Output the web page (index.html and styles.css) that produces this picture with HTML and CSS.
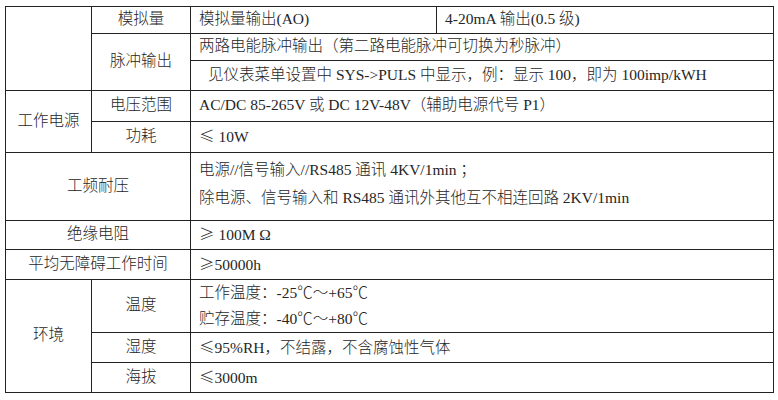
FILE: index.html
```html
<!DOCTYPE html>
<html lang="zh-CN">
<head>
<meta charset="utf-8">
<title>技术参数</title>
<link rel="stylesheet" href="styles.css">
</head>
<body>
<table class="spec">
  <colgroup>
    <col class="c1"><col class="c2"><col class="c3"><col class="c4">
  </colgroup>
  <tr class="h27">
    <td rowspan="3"></td>
    <td class="lab">模拟量</td>
    <td>模拟量输出(AO)</td>
    <td>4-20mA 输出(0.5 级)</td>
  </tr>
  <tr class="h27">
    <td rowspan="2" class="lab">脉冲输出</td>
    <td colspan="2">两路电能脉冲输出（第二路电能脉冲可切换为秒脉冲）</td>
  </tr>
  <tr class="h30">
    <td colspan="2" class="indent">见仪表菜单设置中 SYS-&gt;PULS 中显示，例：显示 100，即为 100imp/kWH</td>
  </tr>
  <tr class="h31">
    <td rowspan="2" class="lab">工作电源</td>
    <td class="lab">电压范围</td>
    <td colspan="2">AC/DC 85-265V 或 DC 12V-48V（辅助电源代号 P1）</td>
  </tr>
  <tr class="h31">
    <td class="lab">功耗</td>
    <td colspan="2"><span class="sym">≤</span> 10W</td>
  </tr>
  <tr class="h68">
    <td colspan="2" class="lab">工频耐压</td>
    <td colspan="2" class="top">电源//信号输入//RS485 通讯 4KV/1min ；<br>除电源、信号输入和 RS485 通讯外其他互不相连回路 2KV/1min</td>
  </tr>
  <tr class="h26">
    <td colspan="2" class="lab">绝缘电阻</td>
    <td colspan="2"><span class="sym">≥</span> 100M Ω</td>
  </tr>
  <tr class="h30">
    <td colspan="2" class="lab">平均无障碍工作时间</td>
    <td colspan="2"><span class="sym">≥</span>50000h</td>
  </tr>
  <tr class="h52">
    <td rowspan="3" class="lab">环境</td>
    <td class="lab">温度</td>
    <td colspan="2" class="two">工作温度：-25℃～+65℃<br>贮存温度：-40℃～+80℃</td>
  </tr>
  <tr class="h30">
    <td class="lab">湿度</td>
    <td colspan="2"><span class="sym">≤</span>95%RH，不结露，不含腐蚀性气体</td>
  </tr>
  <tr class="h30">
    <td class="lab">海拔</td>
    <td colspan="2"><span class="sym">≤</span>3000m</td>
  </tr>
</table>
</body>
</html>
```
FILE: styles.css
```css
html, body {
  margin: 0;
  padding: 0;
  background: #ffffff;
}

body {
  font-family: "Liberation Serif", "Noto Sans CJK SC", serif;
  font-size: 15.5px;
  font-weight: 300;
  color: #262626;
}

.spec {
  border-collapse: collapse;
  table-layout: fixed;
  width: 768px;
  margin: 6px 0 0 5px;
}

.c1 { width: 86px; }
.c2 { width: 99px; }
.c3 { width: 246px; }
.c4 { width: 337px; }

.spec td {
  border: 1px solid #222222;
  padding: 0 0 2px 8px;
  line-height: 24px;
  vertical-align: middle;
  white-space: nowrap;
  overflow: hidden;
}

.spec td.lab {
  text-align: center;
  padding-left: 0;
}

.spec td.indent {
  padding-left: 17px;
}

.spec td.top {
  vertical-align: top;
  padding-top: 3px;
  line-height: 28px;
}

.spec td.two {
  line-height: 26px;
  padding-bottom: 0;
}

.sym {
  font-family: "Noto Sans CJK SC", sans-serif;
  display: inline-block;
  width: 1em;
  text-align: center;
}

.h26 { height: 26px; }
.h27 { height: 27px; }
.h30 { height: 30px; }
.h31 { height: 31px; }
.h52 { height: 52px; }
.h68 { height: 68px; }
```
